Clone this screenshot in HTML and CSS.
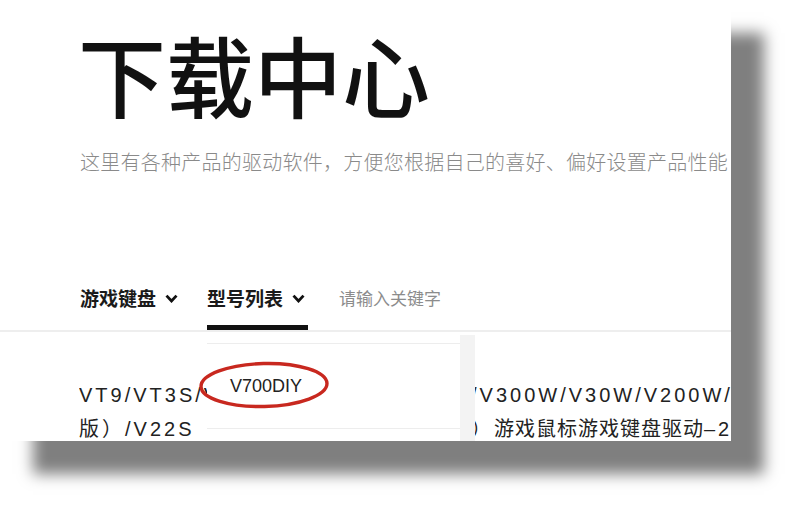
FILE: index.html
```html
<!DOCTYPE html>
<html lang="zh-CN">
<head>
<meta charset="utf-8">
<title>下载中心</title>
<link rel="stylesheet" href="styles.css">
</head>
<body>
<div class="card">
  <header class="hero">
    <h1 class="title">下载中心</h1>
    <p class="subtitle">这里有各种产品的驱动软件，方便您根据自己的喜好、偏好设置产品性能</p>
  </header>
  <nav class="tabs">
    <div class="tab"><span>游戏键盘</span><svg class="chev" width="13" height="9" viewBox="0 0 13 9"><polyline points="1.5,1.6 6.5,7 11.5,1.6"/></svg></div>
    <div class="tab active"><span>型号列表</span><svg class="chev" width="13" height="9" viewBox="0 0 13 9"><polyline points="1.5,1.6 6.5,7 11.5,1.6"/></svg></div>
    <div class="search">请输入关键字</div>
  </nav>
  <section class="list">
    <div class="line"><span class="seg-a">VT9/VT3S/V700DIY/V500PRO/V800</span><span class="seg-b">/V300W/V30W/V200W/V20W</span></div>
    <div class="line"><span class="seg-a">版）/V22S（有线版）/V70（三模</span><span class="seg-b">）<span class="cjk">游戏鼠标游戏键盘驱动</span>–2025</span></div>
  </section>
  <div class="dropdown">
    <ul class="options">
      <li>V700DIY</li>
      <li></li>
    </ul>
    <div class="scrollbar"></div>
  </div>
  <svg class="mark" width="136" height="52" viewBox="0 0 136 52"><ellipse cx="68" cy="26" rx="63" ry="21.5" transform="rotate(-1.5 68 26)"/></svg>
</div>
</body>
</html>
```

FILE: styles.css
```css
* { box-sizing: border-box; }

html, body {
  margin: 0;
  min-height: 510px;
  background: #ffffff;
}

body {
  font-family: "Noto Sans CJK SC", sans-serif;
}

.card {
  position: relative;
  width: 731px;
  height: 441px;
  background: #ffffff;
  box-shadow: 33px 33px 14px rgba(0, 0, 0, 0.5);
  overflow: hidden;
}

.hero {
  padding: 29px 0 0 78px;
}

.title {
  margin: 0;
  font-size: 88px;
  line-height: 88px;
  font-weight: 500;
  color: #111111;
  white-space: nowrap;
}

.subtitle {
  margin: 31px 0 0;
  padding-left: 2px;
  font-size: 20px;
  line-height: 28px;
  font-weight: 300;
  color: #8a8a8a;
  letter-spacing: 0.25px;
  white-space: nowrap;
}

.tabs {
  display: flex;
  align-items: flex-end;
  margin-top: 108px;
  padding-left: 80px;
  border-bottom: 2px solid #eeeeee;
}

.tab {
  display: flex;
  align-items: center;
  gap: 9px;
  padding: 0 3px 13px 0;
  margin-right: 26px;
  border-bottom: 5px solid transparent;
  font-size: 19px;
  line-height: 28px;
  font-weight: 700;
  color: #1a1a1a;
  white-space: nowrap;
}

.tab.active {
  border-bottom-color: #111111;
}

.chev polyline {
  fill: none;
  stroke: #111111;
  stroke-width: 2.8;
}

.search {
  margin-left: 5px;
  padding-bottom: 18px;
  font-size: 17px;
  line-height: 28px;
  color: #8c8c8c;
  white-space: nowrap;
}

.list {
  padding: 46px 0 0 79px;
  font-family: "Liberation Sans", "Noto Sans CJK SC", sans-serif;
  font-size: 20px;
  line-height: 34px;
  letter-spacing: 3px;
  color: #222222;
}

.line {
  display: flex;
  white-space: nowrap;
}

.seg-a {
  flex: none;
  width: 392px;
  overflow: hidden;
}

.seg-b {
  flex: none;
}

.cjk {
  letter-spacing: 1px;
}

.dropdown {
  position: absolute;
  left: 207px;
  top: 335px;
  width: 268px;
  height: 120px;
  display: flex;
  background: #ffffff;
}

.options {
  flex: 1;
  list-style: none;
  margin: 0;
  padding: 8px 0 0;
}

.options li {
  height: 85px;
  display: flex;
  align-items: center;
  padding-left: 23px;
  border-top: 1px solid #ededed;
  font-family: "Liberation Sans", sans-serif;
  font-size: 18px;
  color: #222222;
}

.scrollbar {
  width: 15px;
  background: #f3f3f3;
}

.mark {
  position: absolute;
  left: 196px;
  top: 359px;
}

.mark ellipse {
  fill: none;
  stroke: #c8281f;
  stroke-width: 3.4;
}
```
